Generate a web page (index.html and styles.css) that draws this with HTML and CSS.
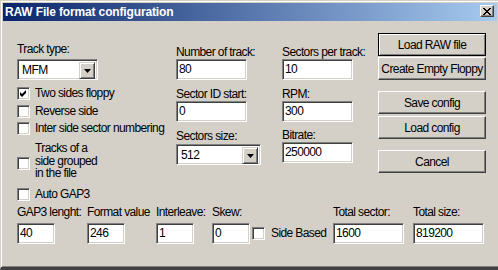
FILE: index.html
```html
<!DOCTYPE html>
<html>
<head>
<meta charset="utf-8">
<link rel="stylesheet" href="styles.css">
</head>
<body>
<div class="window">
  <div class="titlebar">
    <span class="title">RAW File format configuration</span>
    <div class="close">
      <svg width="8" height="7" viewBox="0 0 8 7"><path d="M0 0h2v1h-2zM6 0h2v1h-2zM1 1h2v1h-2zM5 1h2v1h-2zM2 2h4v1h-4zM3 3h2v1h-2zM2 4h4v1h-4zM1 5h2v1h-2zM5 5h2v1h-2zM0 6h2v1h-2zM6 6h2v1h-2z" fill="#000"/></svg>
    </div>
  </div>
  <div class="content">
    <div class="top">
      <div class="col col1">
        <div class="label">Track type:</div>
        <div class="combo combo-mfm">
          <span class="combo-text">MFM</span>
          <span class="drop"><svg width="7" height="4" viewBox="0 0 7 4"><path d="M0 0h7l-3.5 4z" fill="#000"/></svg></span>
        </div>
        <div class="check-row r1">
          <span class="box"><svg width="9" height="9" viewBox="0 0 9 9"><path d="M1 3l2 2 4-4v3l-4 4-2-2z" fill="#000"/></svg></span>
          <span class="check-text">Two sides floppy</span>
        </div>
        <div class="check-row r2">
          <span class="box"></span>
          <span class="check-text">Reverse side</span>
        </div>
        <div class="check-row r3">
          <span class="box"></span>
          <span class="check-text">Inter side sector numbering</span>
        </div>
        <div class="check-row r4 multi">
          <span class="box"></span>
          <span class="check-text"><span class="ln">Tracks of a</span><span class="ln">side grouped</span><span class="ln">in the file</span></span>
        </div>
        <div class="check-row r5">
          <span class="box"></span>
          <span class="check-text">Auto GAP3</span>
        </div>
      </div>
      <div class="col col2">
        <div class="label">Number of track:</div>
        <div class="field w71">80</div>
        <div class="label gap8">Sector ID start:</div>
        <div class="field w71">0</div>
        <div class="label gap8">Sectors size:</div>
        <div class="combo combo-size">
          <span class="combo-text">512</span>
          <span class="drop"><svg width="7" height="4" viewBox="0 0 7 4"><path d="M0 0h7l-3.5 4z" fill="#000"/></svg></span>
        </div>
      </div>
      <div class="col col3">
        <div class="label">Sectors per track:</div>
        <div class="field w71">10</div>
        <div class="label gap8">RPM:</div>
        <div class="field w71">300</div>
        <div class="label gap7">Bitrate:</div>
        <div class="field w71">250000</div>
      </div>
      <div class="col col4">
        <div class="btn default">Load RAW file</div>
        <div class="btn g1">Create Empty Floppy</div>
        <div class="btn g11">Save config</div>
        <div class="btn g2">Load config</div>
        <div class="btn g11">Cancel</div>
      </div>
    </div>
    <div class="bottom">
      <div class="grp gw70">
        <div class="label">GAP3 lenght:</div>
        <div class="field w38">40</div>
      </div>
      <div class="grp gw69">
        <div class="label">Format value</div>
        <div class="field w38">246</div>
      </div>
      <div class="grp gw56">
        <div class="label">Interleave:</div>
        <div class="field w38">1</div>
      </div>
      <div class="grp gw40">
        <div class="label">Skew:</div>
        <div class="field w38">0</div>
      </div>
      <div class="grp gw81">
        <div class="check-row side">
          <span class="box"></span>
          <span class="check-text">Side Based</span>
        </div>
      </div>
      <div class="grp gw80">
        <div class="label">Total sector:</div>
        <div class="field w71">1600</div>
      </div>
      <div class="grp">
        <div class="label">Total size:</div>
        <div class="field w71">819200</div>
      </div>
    </div>
  </div>
</div>
</body>
</html>
```
FILE: styles.css
```css
html, body {
  margin: 0;
  padding: 0;
  background: #d4d0c8;
}
body {
  font-family: "Liberation Sans", Arial, sans-serif;
  font-size: 12px;
  letter-spacing: -0.6px;
  color: #000;
}
.window {
  box-sizing: border-box;
  width: 498px;
  height: 270px;
  background: #d4d0c8;
  border-left: 1px solid #d4d0c8;
  border-top: 1px solid #d4d0c8;
  border-bottom: 3px solid #404040;
  box-shadow: inset 1px 1px #fff, inset 0 -1px #808080;
  padding: 2px 1px 0 2px;
  display: flex;
  flex-direction: column;
}
.titlebar {
  height: 18px;
  background: linear-gradient(to right, #0a246a, #a6caf0);
  display: flex;
  justify-content: space-between;
  align-items: flex-start;
  flex-shrink: 0;
}
.title {
  color: #fff;
  font-weight: bold;
  letter-spacing: -0.15px;
  line-height: 18px;
  padding-left: 2px;
}
.close {
  box-sizing: border-box;
  width: 14px;
  height: 12px;
  margin: 2px 3px 0 0;
  background: #d4d0c8;
  border: 1px solid;
  border-color: #fff #404040 #404040 #fff;
  box-shadow: inset -1px -1px #808080;
  display: flex;
  align-items: center;
  justify-content: center;
}
.close svg { display: block; }
.content {
  flex: 1;
  display: flex;
  flex-direction: column;
}
.top {
  display: flex;
  align-items: flex-start;
  padding-left: 14px;
  height: 185px;
}
.col {
  display: flex;
  flex-direction: column;
  align-items: flex-start;
}
.col1 { width: 159px; padding-top: 22px; }
.col2 { width: 106px; padding-top: 25px; }
.col3 { width: 96px; padding-top: 25px; }
.col4 { width: 108px; padding-top: 12px; }

.label {
  line-height: 13px;
  height: 13px;
  white-space: nowrap;
}
.gap8 { margin-top: 8px; }
.gap7 { margin-top: 7px; }

.field, .combo {
  box-sizing: border-box;
  height: 21px;
  background: #fff;
  border: 1px solid;
  border-color: #808080 #fff #fff #808080;
  box-shadow: inset 1px 1px #404040, inset -1px -1px #d4d0c8;
  padding: 1px 2px 1px 2px;
  line-height: 17px;
  white-space: nowrap;
}
.w71 { width: 71px; }
.w38 { width: 38px; }

.combo {
  display: flex;
  align-items: stretch;
  padding: 2px;
}
.combo-mfm { width: 81px; margin-top: 3px; }
.combo-size { width: 85px; margin-top: 1px; }
.combo-text {
  flex: 1;
  padding-left: 2px;
  line-height: 17px;
}
.drop {
  box-sizing: border-box;
  width: 16px;
  height: 17px;
  background: #d4d0c8;
  border: 1px solid;
  border-color: #d4d0c8 #404040 #404040 #d4d0c8;
  box-shadow: inset 1px 1px #fff, inset -1px -1px #808080;
  display: flex;
  align-items: center;
  justify-content: center;
}
.drop svg { display: block; }

.check-row {
  display: flex;
  align-items: center;
  gap: 5px;
  line-height: 13px;
  white-space: nowrap;
}
.box {
  box-sizing: border-box;
  width: 13px;
  height: 13px;
  flex-shrink: 0;
  background: #fff;
  border: 1px solid;
  border-color: #808080 #fff #fff #808080;
  box-shadow: inset 1px 1px #404040, inset -1px -1px #d4d0c8;
  display: flex;
  align-items: center;
  justify-content: center;
}
.box svg { display: block; }
.r1 { margin-top: 7px; }
.r2 { margin-top: 5px; }
.r3 { margin-top: 4px; }
.r4 { margin-top: 7px; align-items: flex-start; }
.r4 .check-text { display: flex; flex-direction: column; }
.r4 .ln { display: block; height: 12px; line-height: 13px; }
.r4 .ln + .ln { margin-top: 0.5px; }
.r4 .box { margin-top: 15px; }
.r5 { margin-top: 9px; }

.btn {
  box-sizing: border-box;
  width: 108px;
  height: 23px;
  background: #d4d0c8;
  border: 1px solid;
  border-color: #fff #404040 #404040 #fff;
  box-shadow: inset -1px -1px #808080;
  display: flex;
  align-items: center;
  justify-content: center;
  white-space: nowrap;
}
.btn.default {
  border-color: #000;
  box-shadow: inset 1px 1px #fff, inset -1px -1px #808080;
}
.g1 { margin-top: 1px; }
.g2 { margin-top: 2px; }
.g11 { margin-top: 11px; }

.bottom {
  display: flex;
  align-items: flex-end;
  padding-left: 14px;
}
.grp {
  display: flex;
  flex-direction: column;
  align-items: flex-start;
  gap: 4px;
}
.gw70 { width: 70px; }
.gw69 { width: 69px; }
.gw56 { width: 56px; }
.gw40 { width: 40px; }
.gw81 { width: 81px; }
.gw80 { width: 80px; }
.side {
  height: 21px;
  gap: 6px;
}
```
